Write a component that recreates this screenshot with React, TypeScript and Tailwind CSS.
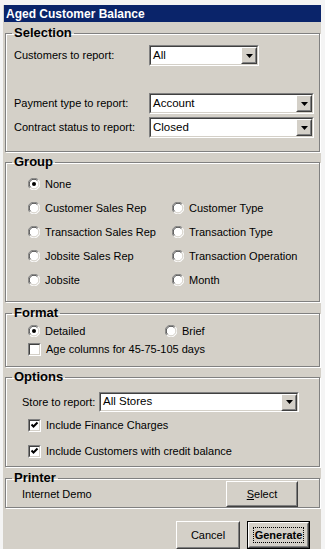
import React from 'react';

const font = { fontFamily: '"Liberation Sans", Arial, sans-serif' };

function Sunken({ children, className = '' }: { children?: React.ReactNode; className?: string }) {
    return (
        <div className={`border border-t-[#808080] border-l-[#808080] border-b-white border-r-white ${className}`}>
            <div className="h-full w-full border border-t-[#404040] border-l-[#404040] border-b-[#d4d0c8] border-r-[#d4d0c8] bg-white">
                {children}
            </div>
        </div>
    );
}

function Raised({ children, className = '' }: { children?: React.ReactNode; className?: string }) {
    return (
        <div className={`border border-t-white border-l-white border-b-[#404040] border-r-[#404040] bg-[#d4d0c8] ${className}`}>
            <div className="h-full w-full border border-t-[#d4d0c8] border-l-[#d4d0c8] border-b-[#808080] border-r-[#808080] flex items-center justify-center">
                {children}
            </div>
        </div>
    );
}

function Combo({ value, width }: { value: string; width: string }) {
    return (
        <Sunken className={`h-[21px] ${width}`}>
            <div className="flex h-full items-center">
                <span className="flex-1 pl-[2px] text-[11.5px] leading-none text-black">{value}</span>
                <Raised className="h-[17px] w-[16px]">
                    <svg width="7" height="4" viewBox="0 0 7 4"><path d="M0 0h7L3.5 4z" fill="#000" /></svg>
                </Raised>
            </div>
        </Sunken>
    );
}

function Radio({ label, checked = false }: { label: string; checked?: boolean }) {
    return (
        <div className="flex items-center gap-[5px] h-[24px]">
            <svg width="12" height="12" viewBox="0 0 12 12" className="shrink-0">
                <circle cx="6" cy="6" r="5.5" fill="#fff" />
                <path d="M10.2 1.8A5.5 5.5 0 0 0 1.8 10.2" stroke="#808080" fill="none" />
                <path d="M9.4 2.6A4.4 4.4 0 0 0 2.6 9.4" stroke="#404040" fill="none" />
                <path d="M1.8 10.2A5.5 5.5 0 0 0 10.2 1.8" stroke="#fff" fill="none" />
                <path d="M2.6 9.4A4.4 4.4 0 0 0 9.4 2.6" stroke="#d4d0c8" fill="none" />
                {checked && <circle cx="6" cy="6" r="2" fill="#000" />}
            </svg>
            <span className="text-[11px] text-black whitespace-nowrap">{label}</span>
        </div>
    );
}

function Check({ label, checked = false }: { label: string; checked?: boolean }) {
    return (
        <div className="flex items-center gap-[5px] h-[20px]">
            <Sunken className="h-[13px] w-[13px] shrink-0">
                {checked && (
                    <svg width="9" height="9" viewBox="0 0 9 9" className="block">
                        <path d="M1.5 3.5l2 2 4-4" stroke="#000" strokeWidth="2" fill="none" />
                    </svg>
                )}
            </Sunken>
            <span className="text-[11px] text-black whitespace-nowrap">{label}</span>
        </div>
    );
}

function Group({ title, className, children }: { title: string; className: string; children: React.ReactNode }) {
    return (
        <fieldset className={`ml-[2px] w-[315px] border border-[#808080] shadow-[inset_1px_1px_0_#fff,1px_1px_0_#fff] ${className}`}>
            <legend className="ml-[6px] px-[2px] text-[13px] font-bold leading-[14px] text-black">{title}</legend>
            {children}
        </fieldset>
    );
}

export default function App() {
    return (
        <div className="w-[325px] h-[549px] bg-[#f4f4f4] pt-[5px] pl-[3px] overflow-hidden" style={font}>
            <div className="w-[318px] h-[544px] bg-[#d4d0c8] flex flex-col">
                <div className="ml-[1px] h-[17px] bg-[#0a246a] pl-[2px] flex items-center">
                    <span className="text-[12px] font-bold text-white">Aged Customer Balance</span>
                </div>

                {/* Selection */}
                <Group title="Selection" className="mt-[4px] h-[126px]">
                    <div className="mt-[5px] flex items-center h-[21px]">
                        <span className="w-[143px] pl-[8px] text-[11px] text-black">Customers to report:</span>
                        <Combo value="All" width="w-[110px]" />
                    </div>
                    <div className="mt-[27px] flex items-center h-[21px]">
                        <span className="w-[143px] pl-[8px] text-[11px] text-black">Payment type to report:</span>
                        <Combo value="Account" width="w-[165px]" />
                    </div>
                    <div className="mt-[3px] flex items-center h-[21px]">
                        <span className="w-[143px] pl-[8px] text-[11px] text-black whitespace-nowrap">Contract status to report:</span>
                        <Combo value="Closed" width="w-[165px]" />
                    </div>
                </Group>

                {/* Group */}
                <Group title="Group" className="mt-[3px] h-[147px]">
                    <div className="mt-[3px] pl-[22px] grid grid-cols-[144px_1fr]">
                        <Radio label="None" checked />
                        <div />
                        <Radio label="Customer Sales Rep" />
                        <Radio label="Customer Type" />
                        <Radio label="Transaction Sales Rep" />
                        <Radio label="Transaction Type" />
                        <Radio label="Jobsite Sales Rep" />
                        <Radio label="Transaction Operation" />
                        <Radio label="Jobsite" />
                        <Radio label="Month" />
                    </div>
                </Group>

                {/* Format */}
                <Group title="Format" className="mt-[4px] h-[61px]">
                    <div className="mt-[-1px] pl-[22px]">
                        <div className="grid grid-cols-[137px_1fr] h-[20px] items-center">
                            <Radio label="Detailed" checked />
                            <Radio label="Brief" />
                        </div>
                        <Check label="Age columns for 45-75-105 days" />
                    </div>
                </Group>

                {/* Options */}
                <Group title="Options" className="mt-[3px] h-[97px]">
                    <div className="mt-[8px] flex items-center h-[20px] pl-[16px]">
                        <span className="w-[77px] text-[11px] text-black whitespace-nowrap">Store to report:</span>
                        <Combo value="All Stores" width="w-[200px] !h-[20px]" />
                    </div>
                    <div className="mt-[3px] pl-[22px] flex flex-col gap-[6px]">
                        <Check label="Include Finance Charges" checked />
                        <Check label="Include Customers with credit balance" checked />
                    </div>
                </Group>

                {/* Printer */}
                <Group title="Printer" className="mt-[4px] h-[37px]">
                    <div className="-mt-[4px] flex items-center justify-between h-[26px] pl-[16px] pr-[21px]">
                        <span className="text-[11px] text-black">Internet Demo</span>
                        <Raised className="h-[26px] w-[72px]">
                            <span className="text-[11px] text-black"><span className="underline">S</span>elect</span>
                        </Raised>
                    </div>
                </Group>

                <div className="mt-[13px] flex justify-end gap-[7px] pr-[11px]">
                    <Raised className="h-[28px] w-[64px]">
                        <span className="text-[11px] text-black">Cancel</span>
                    </Raised>
                    <div className="h-[28px] w-[63px] border border-black">
                        <Raised className="h-full w-full">
                            <span className="border border-dotted border-black px-[1px] text-[11px] font-bold leading-[14px] text-black">Generate</span>
                        </Raised>
                    </div>
                </div>
            </div>
        </div>
    );
}
